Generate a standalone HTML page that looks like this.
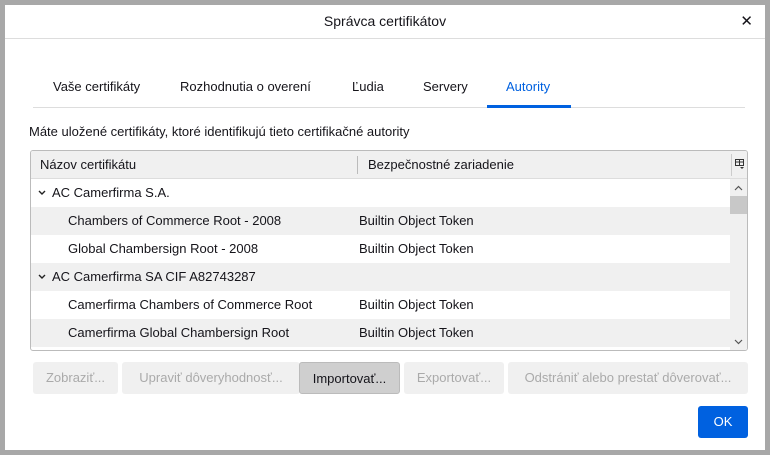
<!DOCTYPE html>
<html><head><meta charset="utf-8"><style>
*{box-sizing:border-box;margin:0;padding:0}
body{width:770px;height:455px;background:#a8a8a8;font-family:"Liberation Sans",sans-serif;font-size:13px;color:#15141a;position:relative;overflow:hidden}
.dlg{position:absolute;left:5px;top:5px;width:760px;height:445px;background:#fff}
.title{position:absolute;left:0;top:0;width:760px;height:34px;border-bottom:1px solid #ddd;text-align:center;line-height:33px;font-size:14px}
.x{position:absolute;right:12px;top:0;font-size:15px;line-height:33px}
.abs{position:absolute;white-space:nowrap}
.tabsep{position:absolute;left:28px;top:102px;width:712px;height:1px;background:#ddd}
.tabul{position:absolute;left:482px;top:100px;width:84px;height:3px;background:#0061e0}
.tbl{position:absolute;left:25px;top:145px;width:718px;height:201px;border:1px solid #bbb;border-radius:3px;overflow:hidden}
.hdr{position:absolute;left:0;top:0;width:716px;height:28px;background:#f0f0f0;border-bottom:1px solid #ddd}
.row{position:absolute;left:0;width:699px;height:28px;line-height:28px}
.g{background:#f0f0f0}
.sb{position:absolute;left:699px;top:28px;width:17px;height:172px;background:#f0f0f0}
.btn{position:absolute;top:357px;height:32px;background:#f0f0f0;border-radius:3px;color:#aaa;text-align:center;line-height:32px}
</style></head><body>
<div class="dlg">
<div class="title">Správca certifikátov<span class="x">✕</span></div>
<div class="abs" style="left:48px;top:74px">Vaše certifikáty</div>
<div class="abs" style="left:175px;top:74px">Rozhodnutia o overení</div>
<div class="abs" style="left:347px;top:74px">Ľudia</div>
<div class="abs" style="left:418px;top:74px">Servery</div>
<div class="abs" style="left:501px;top:74px;color:#0061e0">Autority</div>
<div class="tabsep"></div><div class="tabul"></div>
<div class="abs" style="left:24px;top:119px">Máte uložené certifikáty, ktoré identifikujú tieto certifikačné autority</div>
<div class="tbl">
<div class="hdr"><span class="abs" style="left:9px;top:6px">Názov certifikátu</span><span class="abs" style="left:326px;top:5px;width:1px;height:18px;background:#bbb"></span><span class="abs" style="left:337px;top:6px">Bezpečnostné zariadenie</span><span class="abs" style="left:700px;top:3px;width:1px;height:22px;background:#ccc"></span>
<svg class="abs" style="left:704px;top:8px" width="10" height="10" viewBox="0 0 10 10"><rect x="0.5" y="0.5" width="8" height="6" fill="none" stroke="#333"/><line x1="0.5" y1="3" x2="8.5" y2="3" stroke="#333"/><line x1="4.5" y1="0.5" x2="4.5" y2="6.5" stroke="#333"/><path d="M5 8h4l-2 2z" fill="#333"/></svg></div>
<div class="row" style="top:28px"><svg class="abs" style="left:7px;top:11px" width="8" height="6"><path d="M1 1l3 3 3-3" fill="none" stroke="#222" stroke-width="1.4"/></svg><span class="abs" style="left:21px">AC Camerfirma S.A.</span></div>
<div class="row g" style="top:56px"><span class="abs" style="left:37px">Chambers of Commerce Root - 2008</span><span class="abs" style="left:328px">Builtin Object Token</span></div>
<div class="row" style="top:84px"><span class="abs" style="left:37px">Global Chambersign Root - 2008</span><span class="abs" style="left:328px">Builtin Object Token</span></div>
<div class="row g" style="top:112px"><svg class="abs" style="left:7px;top:11px" width="8" height="6"><path d="M1 1l3 3 3-3" fill="none" stroke="#222" stroke-width="1.4"/></svg><span class="abs" style="left:21px">AC Camerfirma SA CIF A82743287</span></div>
<div class="row" style="top:140px"><span class="abs" style="left:37px">Camerfirma Chambers of Commerce Root</span><span class="abs" style="left:328px">Builtin Object Token</span></div>
<div class="row g" style="top:168px"><span class="abs" style="left:37px">Camerfirma Global Chambersign Root</span><span class="abs" style="left:328px">Builtin Object Token</span></div>
<div class="sb"><span class="abs" style="left:0;top:17px;width:17px;height:18px;background:#c8c8c8"></span>
<svg class="abs" style="left:4px;top:6px" width="9" height="6"><path d="M1 5l3.5-3.5L8 5" fill="none" stroke="#555" stroke-width="1.2"/></svg>
<svg class="abs" style="left:4px;top:160px" width="9" height="6"><path d="M1 1l3.5 3.5L8 1" fill="none" stroke="#555" stroke-width="1.2"/></svg></div>
</div>
<div class="btn" style="left:28px;width:85px">Zobraziť...</div>
<div class="btn" style="left:117px;width:178px">Upraviť dôveryhodnosť...</div>
<div class="btn" style="left:294px;width:101px;background:#cfcfcf;color:#15141a;border:1px solid #bbb">Importovať...</div>
<div class="btn" style="left:399px;width:100px">Exportovať...</div>
<div class="btn" style="left:503px;width:240px">Odstrániť alebo prestať dôverovať...</div>
<div class="btn" style="left:693px;top:401px;width:50px;height:32px;background:#0061e0;color:#fff">OK</div>
</div>
</body></html>
